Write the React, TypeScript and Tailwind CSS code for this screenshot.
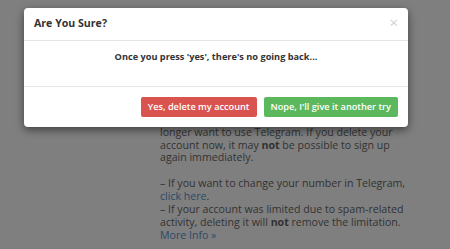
export default function App() {
  const font = { fontFamily: '"Open Sans", "Noto Sans", sans-serif' };
  return (
    <div className="relative w-[450px] h-[249px] overflow-hidden bg-[#7f7f7f]" style={font}>
      <div className="pl-[160px] pt-[74px] text-[10.6px] leading-[12.9px] text-[#323232] whitespace-nowrap">
        <div>Are you sure you want to delete your</div>
        <div>Telegram account? This will remove all</div>
        <div>messages and contacts, in case you no</div>
        <div>need to keep it around any longer. Do</div>
        <div>longer want to use Telegram. If you delete your</div>
        <div>
          account now, it may <b className="font-bold">not</b> be possible to sign up
        </div>
        <div>again immediately.</div>
        <div className="h-[12.9px]" />
        <div>– If you want to change your number in Telegram,</div>
        <div>
          <span className="text-[#2a4966]">click here</span>.
        </div>
        <div>– If your account was limited due to spam-related</div>
        <div>
          activity, deleting it will <b className="font-bold">not</b> remove the limitation.
        </div>
        <div className="text-[#2a4966]">More Info »</div>
      </div>

      <div className="absolute left-[24px] top-[8px] w-[384px] rounded-[4px] bg-white shadow-[0_3px_9px_rgba(0,0,0,0.5)]">
        <div className="relative h-[33px] flex items-center px-[10px] border-b border-[#e5e5e5]">
          <span className="text-[10.6px] font-bold text-[#333]">Are You Sure?</span>
          <span className="absolute right-[10px] top-[7px] text-[15px] leading-[15px] text-[#d0d0d0]">×</span>
        </div>
        <div className="h-[46px] flex items-start justify-center pt-[9px] border-b border-[#e5e5e5]">
          <span className="text-[9.2px] font-bold text-[#333]">Once you press 'yes', there's no going back...</span>
        </div>
        <div className="h-[40px] flex items-center justify-end gap-[7px] pr-[10px]">
          <button className="h-[20px] px-[7px] rounded-[2px] bg-[#d9534f] text-white text-[9.2px] font-semibold">
            Yes, delete my account
          </button>
          <button className="h-[20px] px-[7px] rounded-[2px] bg-[#5cb85c] text-white text-[9.2px] font-semibold">
            Nope, I'll give it another try
          </button>
        </div>
      </div>
    </div>
  );
}
